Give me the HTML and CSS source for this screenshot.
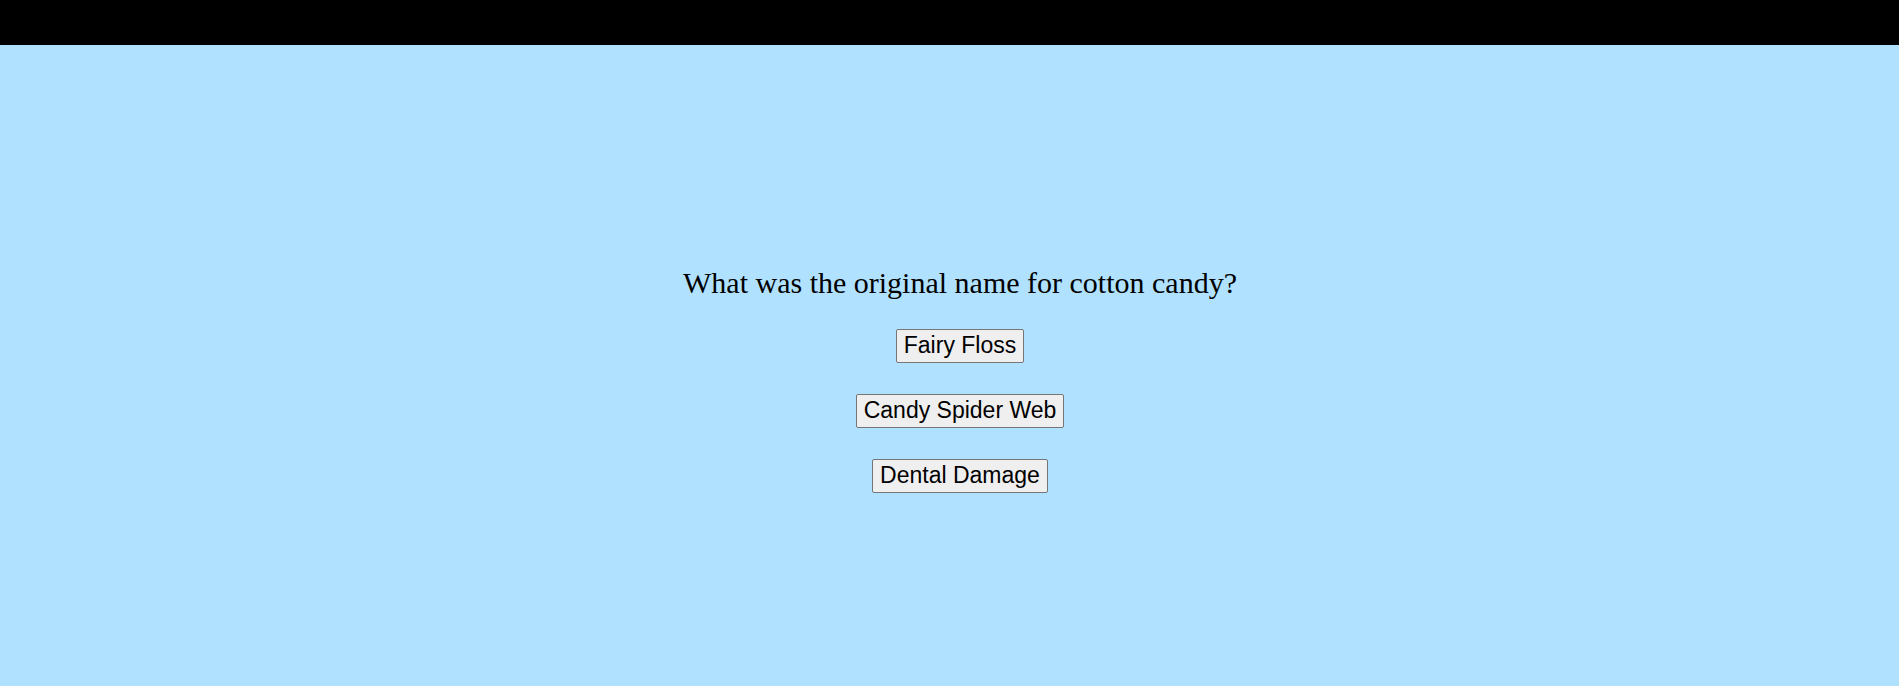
FILE: index.html
```html
<!DOCTYPE html>
<html lang="en">
<head>
<meta charset="utf-8">
<title>Trivia</title>
<link rel="stylesheet" href="styles.css">
</head>
<body>
<header class="topbar"></header>
<main class="quiz">
<p class="question">What was the original name for cotton candy?</p>
<ul class="answers">
<li><button class="answer" type="button">Fairy Floss</button></li>
<li><button class="answer" type="button">Candy Spider Web</button></li>
<li><button class="answer" type="button">Dental Damage</button></li>
</ul>
</main>
</body>
</html>
```
FILE: styles.css
```css
body {
  margin: 0;
  min-height: 100vh;
  background: #b0e2ff;
  color: #000;
  font-family: "Liberation Serif", "Times New Roman", serif;
}

.topbar {
  height: 45px;
  background: #000;
}

.quiz {
  padding: 220px 0 0 21px;
  font-size: 30px;
  line-height: 35px;
  text-align: center;
}

.question {
  margin: 0 0 29px;
}

.answers {
  display: flex;
  flex-direction: column;
  align-items: center;
  gap: 31px;
  margin: 0;
  padding: 0;
  list-style: none;
}

.answers li {
  display: flex;
}

.answer {
  padding: 2px 7px 4px;
  border: 1px solid #767676;
  border-radius: 2px;
  background: #efefef;
  color: #000;
  font-family: "Liberation Sans", Arial, sans-serif;
  font-size: 23px;
  line-height: 26px;
}
```
